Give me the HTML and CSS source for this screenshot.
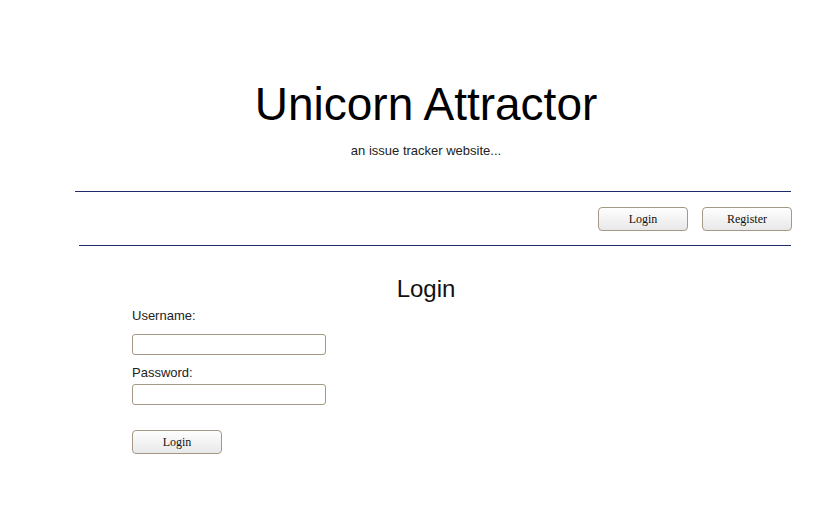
FILE: index.html
```html
<!DOCTYPE html>
<html lang="en">
<head>
<meta charset="utf-8">
<title>Unicorn Attractor</title>
<link rel="stylesheet" href="styles.css">
</head>
<body>
<div class="page">
  <header class="site-header">
    <h1 class="title">Unicorn Attractor</h1>
    <p class="tagline">an issue tracker website...</p>
  </header>
  <hr class="rule rule-top">
  <nav class="nav">
    <button class="btn" type="button">Login</button>
    <button class="btn" type="button">Register</button>
  </nav>
  <hr class="rule rule-bottom">
  <main class="content">
    <h2 class="heading">Login</h2>
    <form class="login-form">
      <label class="label label-user" for="username">Username:</label>
      <input class="field" id="username" type="text">
      <label class="label label-pass" for="password">Password:</label>
      <input class="field" id="password" type="password">
      <button class="btn btn-submit" type="button">Login</button>
    </form>
  </main>
</div>
</body>
</html>
```
FILE: styles.css
```css
html, body {
  margin: 0;
  padding: 0;
  background: #ffffff;
}

body {
  font-family: "Liberation Sans", Arial, sans-serif;
  color: #222;
}

.page {
  margin-left: 60px;
  width: 732px;
  padding-top: 78px;
}

.site-header {
  text-align: center;
}

.title {
  margin: 0;
  font-size: 46px;
  font-weight: normal;
  line-height: 53px;
  color: #000;
}

.tagline {
  margin: 12px 0 0;
  font-size: 13px;
  line-height: 15px;
  color: #222;
}

.rule {
  border: 0;
  border-top: 1px solid #1f2b6a;
  height: 0;
  margin: 0;
}

.rule-top {
  margin-top: 33px;
  margin-left: 15px;
  margin-right: 1px;
}

.rule-bottom {
  margin-top: 14px;
  margin-left: 19px;
  margin-right: 1px;
}

.nav {
  display: flex;
  justify-content: flex-end;
  gap: 14px;
  padding-top: 15px;
}

.btn {
  box-sizing: border-box;
  width: 90px;
  height: 24px;
  padding: 0;
  border: 1px solid #a59886;
  border-radius: 4px;
  background: linear-gradient(#fefefe, #f1f1f1 60%, #e8e8e8);
  font-family: "Liberation Serif", "Times New Roman", serif;
  font-size: 12px;
  color: #111;
}

.content {
  padding-top: 29px;
}

.heading {
  margin: 0;
  text-align: center;
  font-size: 24px;
  font-weight: normal;
  line-height: 28px;
  color: #111;
}

.login-form {
  display: flex;
  flex-direction: column;
  align-items: flex-start;
  margin-left: 72px;
  padding-top: 5px;
}

.label {
  display: block;
  font-size: 13px;
  line-height: 15px;
  color: #222;
}

.label-pass {
  margin-top: 10px;
}

.field {
  box-sizing: border-box;
  width: 194px;
  height: 21px;
  margin: 0;
  border: 1px solid #a59886;
  border-radius: 3px;
  background: #fff;
}

#username {
  margin-top: 11px;
}

#password {
  margin-top: 4px;
}

.btn-submit {
  margin-top: 25px;
}
```
